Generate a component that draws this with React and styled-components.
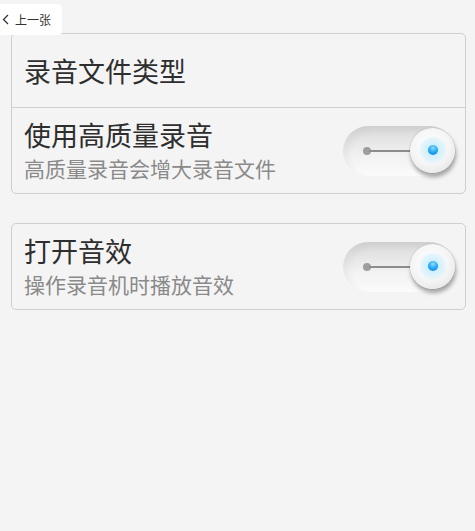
import styled, { createGlobalStyle } from 'styled-components';

const GlobalStyle = createGlobalStyle`
  html, body {
    margin: 0;
    padding: 0;
    background: #f4f4f4;
    font-family: 'Noto Sans CJK SC', 'Noto Sans', sans-serif;
  }
`;

const settings = [
  [{ title: '录音文件类型' }, { title: '使用高质量录音', sub: '高质量录音会增大录音文件', toggle: true }],
  [{ title: '打开音效', sub: '操作录音机时播放音效', toggle: true }],
];

function Switch() {
  return (
    <Track>
      <Dot />
      <Wire />
      <Knob>
        <Halo>
          <Glow />
        </Halo>
      </Knob>
    </Track>
  );
}

function App() {
  return (
    <Page>
      <GlobalStyle />
      <BackButton>
        <svg width="7" height="11" viewBox="0 0 7 11">
          <polyline points="6,1 1.5,5.5 6,10" fill="none" stroke="#333" strokeWidth="1.3" />
        </svg>
        上一张
      </BackButton>
      {settings.map((group, i) => (
        <Card key={i}>
          {group.map((item) => (
            <Row key={item.title} tall={!!item.sub}>
              <Texts>
                <Title>{item.title}</Title>
                {item.sub && <Sub>{item.sub}</Sub>}
              </Texts>
              {item.toggle && <Switch />}
            </Row>
          ))}
        </Card>
      ))}
    </Page>
  );
}

const Page = styled.div`
  position: relative;
  padding: 33px 9px 0 11px;
  min-height: 531px;
  box-sizing: border-box;
`;

const BackButton = styled.div`
  position: absolute;
  left: 0;
  top: 4px;
  width: 62px;
  height: 31px;
  background: #fff;
  border-radius: 0 4px 4px 0;
  display: flex;
  align-items: center;
  gap: 6px;
  padding-left: 2px;
  box-sizing: border-box;
  font-size: 12px;
  color: #333;
  z-index: 2;
`;

const Card = styled.div`
  border: 1px solid #cfcfcf;
  border-radius: 5px;
  background: #f4f4f4;
  margin-bottom: 29px;
`;

const Row = styled.div`
  display: flex;
  align-items: center;
  justify-content: space-between;
  height: ${(p) => (p.tall ? '85px' : '73px')};
  padding: 0 10px 0 12px;
  & + & {
    border-top: 1px solid #cfcfcf;
  }
`;

const Texts = styled.div`
  display: flex;
  flex-direction: column;
`;

const Title = styled.div`
  font-size: 27px;
  line-height: 32px;
  color: #2e2e2e;
`;

const Sub = styled.div`
  font-size: 21px;
  line-height: 28px;
  margin-top: 3px;
  color: #8a8a8a;
`;

const Track = styled.div`
  position: relative;
  width: 112px;
  height: 50px;
  border-radius: 25px;
  background: linear-gradient(to bottom, #d6d6d6 0%, #e4e4e4 25%, #f2f2f2 60%, #fbfbfb 100%);
  box-shadow: inset 6px 4px 6px rgba(0, 0, 0, 0.04);
  flex-shrink: 0;
`;

const Dot = styled.div`
  position: absolute;
  left: 20px;
  top: 21px;
  width: 8px;
  height: 8px;
  border-radius: 50%;
  background: #9e9e9e;
`;

const Wire = styled.div`
  position: absolute;
  left: 26px;
  top: 24px;
  width: 46px;
  height: 2px;
  background: #8c8c8c;
`;

const Knob = styled.div`
  position: absolute;
  right: 0;
  top: 2px;
  width: 45px;
  height: 45px;
  border-radius: 50%;
  background: radial-gradient(circle at 45% 40%, #ffffff 0%, #f5f5f5 50%, #dedede 100%);
  box-shadow: 1px 4px 4px rgba(0, 0, 0, 0.35), 0 0 1px rgba(0, 0, 0, 0.35);
  display: flex;
  align-items: center;
  justify-content: center;
`;

const Halo = styled.div`
  width: 26px;
  height: 26px;
  border-radius: 50%;
  background: radial-gradient(circle, #bfe9fb 0%, #dcf3fc 50%, rgba(240, 250, 255, 0) 100%);
  display: flex;
  align-items: center;
  justify-content: center;
`;

const Glow = styled.div`
  width: 10px;
  height: 10px;
  border-radius: 50%;
  background: radial-gradient(circle at 50% 30%, #8bdcff 0%, #1ea3f2 55%, #0b82d8 100%);
`;

export default App;
